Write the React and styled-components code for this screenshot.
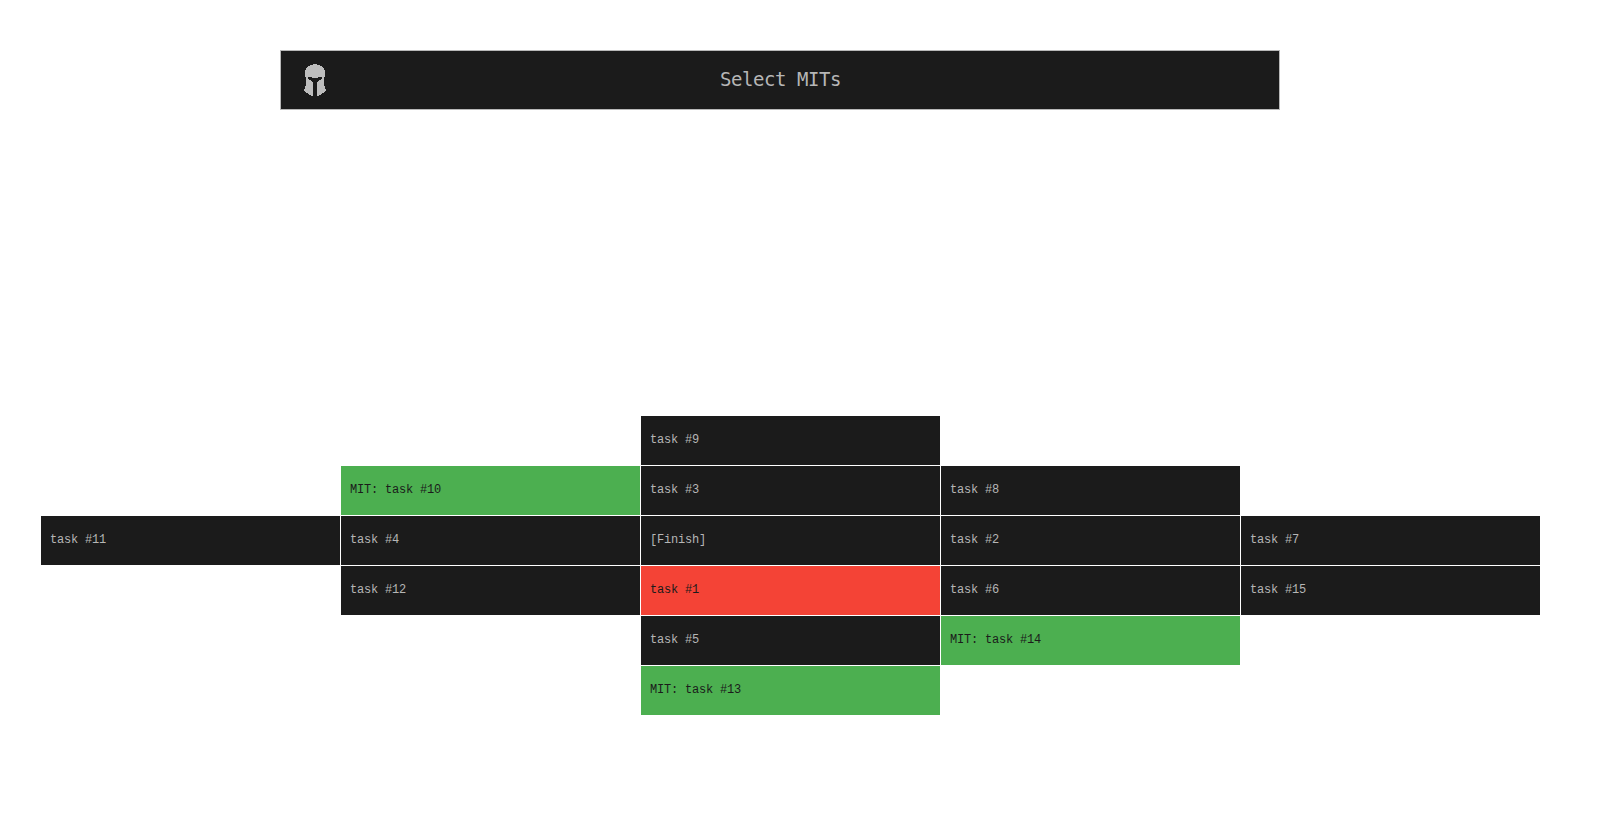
import React from "react";
import styled, { createGlobalStyle, css } from "styled-components";

const GlobalStyle = createGlobalStyle`
  body {
    margin: 0;
    background: #fff;
  }
`;

const Page = styled.main`
  display: flex;
  flex-direction: column;
  width: 1606px;
  height: 838px;
  box-sizing: border-box;
  padding: 50px 66px 0 41px;
`;

const Header = styled.header`
  display: grid;
  grid-template-columns: 45px 1fr 45px;
  align-items: center;
  width: 1000px;
  height: 60px;
  margin-left: 239px;
  box-sizing: border-box;
  border: 1px solid #b8b8b8;
  background: #1b1b1b;
`;

const Helmet = styled.svg`
  display: block;
  width: 22px;
  height: 32px;
  justify-self: end;
  fill: #bdbdbd;
`;

const Title = styled.h1`
  margin: 0;
  padding: 0 0 2px 1px;
  text-align: center;
  font: 400 19px/22px "DejaVu Sans Mono", monospace;
  letter-spacing: -0.44px;
  color: #b6b6b6;
`;

const TaskGrid = styled.section`
  display: grid;
  grid-template-columns: repeat(5, 299px);
  grid-auto-rows: 49px;
  gap: 1px;
  margin-top: 306px;
`;

const tones = {
  plain: css`
    background: #1b1b1b;
    color: #b6b6b6;
  `,
  mit: css`
    background: #4caf50;
    color: #1b1b1b;
  `,
  current: css`
    background: #f44336;
    color: #1b1b1b;
  `,
};

const TaskCell = styled.div`
  display: flex;
  align-items: center;
  grid-column: ${(p) => p.$col};
  grid-row: ${(p) => p.$row};
  padding: 0 9px 2px;
  font: 12px/14px "Liberation Mono", monospace;
  letter-spacing: -0.2px;
  ${(p) => tones[p.$tone]}
`;

const tasks = [
  { label: "task #9", col: 3, row: 1 },
  { label: "MIT: task #10", col: 2, row: 2, tone: "mit" },
  { label: "task #3", col: 3, row: 2 },
  { label: "task #8", col: 4, row: 2 },
  { label: "task #11", col: 1, row: 3 },
  { label: "task #4", col: 2, row: 3 },
  { label: "[Finish]", col: 3, row: 3 },
  { label: "task #2", col: 4, row: 3 },
  { label: "task #7", col: 5, row: 3 },
  { label: "task #12", col: 2, row: 4 },
  { label: "task #1", col: 3, row: 4, tone: "current" },
  { label: "task #6", col: 4, row: 4 },
  { label: "task #15", col: 5, row: 4 },
  { label: "task #5", col: 3, row: 5 },
  { label: "MIT: task #14", col: 4, row: 5, tone: "mit" },
  { label: "MIT: task #13", col: 3, row: 6, tone: "mit" },
];

export default function App() {
  return (
    <>
      <GlobalStyle />
      <Page>
        <Header>
          <Helmet viewBox="0 0 22 32" shapeRendering="crispEdges">
            <path d="M9 0H13V1H16V2H18V3H19V4H20V6H21V13H20V22H21V25H22V27H21V28H20V29H18V30H17V31H15V32H13V18H14V17H15V16H17V15H18V13H14V14H8V13H4V15H5V16H7V17H8V18H9V32H7V31H5V30H4V29H2V28H1V27H0V25H1V22H2V13H1V6H2V4H3V3H4V2H6V1H9Z" />
          </Helmet>
          <Title>Select MITs</Title>
        </Header>
        <TaskGrid>
          {tasks.map((t) => (
            <TaskCell key={t.label} $col={t.col} $row={t.row} $tone={t.tone || "plain"}>
              {t.label}
            </TaskCell>
          ))}
        </TaskGrid>
      </Page>
    </>
  );
}
